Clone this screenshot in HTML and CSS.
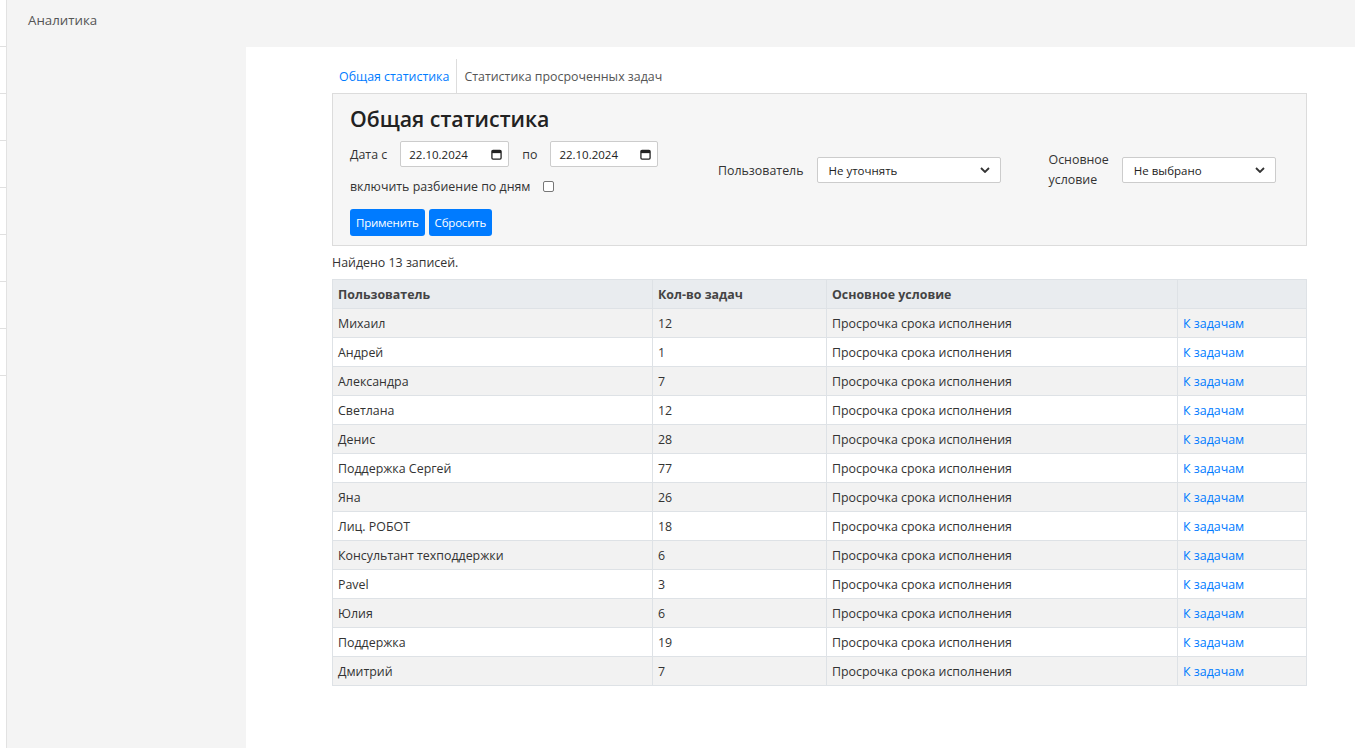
FILE: index.html
```html
<!DOCTYPE html>
<html lang="ru">
<head>
<meta charset="utf-8">
<title>Аналитика</title>
<link rel="stylesheet" href="styles.css">
</head>
<body>
<div class="app">
  <div class="strip">
    <div class="strip-cell"></div><div class="strip-cell"></div><div class="strip-cell"></div><div class="strip-cell"></div>
    <div class="strip-cell"></div><div class="strip-cell"></div><div class="strip-cell"></div><div class="strip-cell"></div>
  </div>
  <div class="frame">
    <header class="topbar">Аналитика</header>
    <div class="body">
      <aside class="sidebar"></aside>
      <main class="main">
        <div class="content">
          <nav class="tabs">
            <a class="tab active" href="#">Общая статистика</a>
            <a class="tab" href="#">Статистика просроченных задач</a>
          </nav>
          <section class="panel">
            <div class="panel-left">
              <h1 class="title">Общая статистика</h1>
              <div class="row dates">
                <span class="lbl">Дата с</span>
                <div class="date"><span>22.10.2024</span><svg class="cal" viewBox="0 0 12 12" width="11" height="11"><rect x="1" y="1.5" width="10" height="9.5" rx="1.2" fill="none" stroke="#222" stroke-width="1.4"/><rect x="1" y="1.5" width="10" height="3" fill="#222"/></svg></div>
                <span class="lbl po">по</span>
                <div class="date"><span>22.10.2024</span><svg class="cal" viewBox="0 0 12 12" width="11" height="11"><rect x="1" y="1.5" width="10" height="9.5" rx="1.2" fill="none" stroke="#222" stroke-width="1.4"/><rect x="1" y="1.5" width="10" height="3" fill="#222"/></svg></div>
              </div>
              <div class="row split">
                <span class="lbl">включить разбиение по дням</span>
                <span class="check"></span>
              </div>
              <div class="row btns">
                <button class="btn">Применить</button>
                <button class="btn">Сбросить</button>
              </div>
            </div>
            <div class="filter user">
              <span class="lbl">Пользователь</span>
              <div class="select"><span>Не уточнять</span><svg viewBox="0 0 10 6" width="10" height="6"><path d="M1 1l4 4 4-4" fill="none" stroke="#333" stroke-width="1.8"/></svg></div>
            </div>
            <div class="filter cond">
              <span class="lbl two">Основное<br>условие</span>
              <div class="select narrow"><span>Не выбрано</span><svg viewBox="0 0 10 6" width="10" height="6"><path d="M1 1l4 4 4-4" fill="none" stroke="#333" stroke-width="1.8"/></svg></div>
            </div>
          </section>
          <p class="found">Найдено 13 записей.</p>
          <table class="grid">
            <thead>
              <tr><th class="c1">Пользователь</th><th class="c2">Кол-во задач</th><th class="c3">Основное условие</th><th class="c4"></th></tr>
            </thead>
            <tbody>
              <tr><td>Михаил</td><td>12</td><td>Просрочка срока исполнения</td><td><a href="#">К задачам</a></td></tr>
              <tr><td>Андрей</td><td>1</td><td>Просрочка срока исполнения</td><td><a href="#">К задачам</a></td></tr>
              <tr><td>Александра</td><td>7</td><td>Просрочка срока исполнения</td><td><a href="#">К задачам</a></td></tr>
              <tr><td>Светлана</td><td>12</td><td>Просрочка срока исполнения</td><td><a href="#">К задачам</a></td></tr>
              <tr><td>Денис</td><td>28</td><td>Просрочка срока исполнения</td><td><a href="#">К задачам</a></td></tr>
              <tr><td>Поддержка Сергей</td><td>77</td><td>Просрочка срока исполнения</td><td><a href="#">К задачам</a></td></tr>
              <tr><td>Яна</td><td>26</td><td>Просрочка срока исполнения</td><td><a href="#">К задачам</a></td></tr>
              <tr><td>Лиц. РОБОТ</td><td>18</td><td>Просрочка срока исполнения</td><td><a href="#">К задачам</a></td></tr>
              <tr><td>Консультант техподдержки</td><td>6</td><td>Просрочка срока исполнения</td><td><a href="#">К задачам</a></td></tr>
              <tr><td>Pavel</td><td>3</td><td>Просрочка срока исполнения</td><td><a href="#">К задачам</a></td></tr>
              <tr><td>Юлия</td><td>6</td><td>Просрочка срока исполнения</td><td><a href="#">К задачам</a></td></tr>
              <tr><td>Поддержка</td><td>19</td><td>Просрочка срока исполнения</td><td><a href="#">К задачам</a></td></tr>
              <tr><td>Дмитрий</td><td>7</td><td>Просрочка срока исполнения</td><td><a href="#">К задачам</a></td></tr>
            </tbody>
          </table>
        </div>
      </main>
    </div>
  </div>
</div>
</body>
</html>
```

FILE: styles.css
```css
* { box-sizing: border-box; }
html, body { margin: 0; padding: 0; height: 100%; }
body {
  font-family: "Open Sans", "Noto Sans", "Liberation Sans", sans-serif;
  font-size: 12.4px;
  color: #212529;
  background: #fff;
  overflow: hidden;
}
.app { display: flex; height: 748px; }
.strip {
  width: 7px;
  flex: none;
  border-right: 1px solid #e2e2e2;
  background: #fff;
}
.strip-cell { height: 47px; border-bottom: 1px solid #e0e0e0; }
.frame { flex: 1; display: flex; flex-direction: column; background: #f4f4f4; }
.topbar {
  height: 47px;
  padding: 11px 0 0 21px;
  font-size: 13.3px;
  color: #555;
  background: #f4f4f4;
}
.body { flex: 1; display: flex; }
.sidebar { width: 239px; flex: none; background: #f4f4f4; }
.main { flex: 1; background: #fff; }
.content { margin-left: 86px; width: 975px; padding-top: 12px; }

.tabs { display: flex; height: 34px; align-items: stretch; }
.tab {
  display: flex; align-items: center;
  padding: 1px 7px 0 7px;
  text-decoration: none;
  color: #555;
  font-size: 12.4px;
}
.tab.active { color: #007bff; border-right: 1px solid #ddd; }

.panel {
  display: flex;
  background: #f6f6f6;
  border: 1px solid #dcdcdc;
  height: 153px;
  padding: 8px 17px 0 17px;
}
.panel-left { width: 368px; flex: none; }
.title { margin: 0; font-size: 21.3px; font-weight: 600; color: #222; line-height: 33px; }
.row { display: flex; align-items: center; }
.lbl { color: #333; font-size: 12.4px; }
.dates { margin-top: 6px; height: 26px; }
.dates .lbl { margin-right: 13px; }
.dates .po { margin-left: 13px; margin-right: 13px; }
.date {
  display: flex; align-items: center; justify-content: space-between;
  height: 26px;
  padding: 0 6px 0 8px;
  background: #fff;
  border: 1px solid #ccc;
  border-radius: 2px;
  font-size: 11.5px;
  color: #222;
  width: 109px;
}
.date:last-child { width: 108px; }
.split { margin-top: 7px; height: 25px; }
.check {
  width: 11px; height: 11px;
  margin-left: 13px;
  border: 1px solid #777;
  border-radius: 2px;
  background: #fff;
}
.btns { margin-top: 10px; gap: 4px; }
.btn {
  height: 27px;
  border: none;
  border-radius: 3px;
  background: #007bff;
  color: #fff;
  font-family: inherit;
  font-size: 11.5px;
  padding: 0 6px;
  letter-spacing: -0.2px;
}

.filter { display: flex; align-items: center; height: 26px; margin-top: 55px; }
.user .lbl { margin-right: 13px; }
.cond { margin-left: 48px; }
.cond .lbl { margin-right: 13px; line-height: 20px; }
.select {
  display: flex; align-items: center; justify-content: space-between;
  width: 184px; height: 26px;
  background: #fff;
  border: 1px solid #ccc;
  border-radius: 2px;
  padding: 0 10px 0 11px;
  font-size: 11.5px;
  color: #222;
}
.select.narrow { width: 154px; }

.found { margin: 8px 0 7px 0; color: #333; font-size: 12.4px; line-height: 18px; }

.grid {
  width: 975px;
  border-collapse: collapse;
  font-size: 12.4px;
  color: #333;
}
.grid th, .grid td {
  border: 1px solid #dee2e6;
  height: 29px;
  padding: 0 5px;
  text-align: left;
  vertical-align: middle;
}
.grid th { background: #e9ecef; font-weight: 700; color: #444; }
.grid .c1 { width: 320px; }
.grid .c2 { width: 174px; }
.grid .c3 { width: 351px; }
.grid tbody tr:nth-child(odd) td { background: #f2f2f2; }
.grid a { color: #007bff; text-decoration: none; }
```
